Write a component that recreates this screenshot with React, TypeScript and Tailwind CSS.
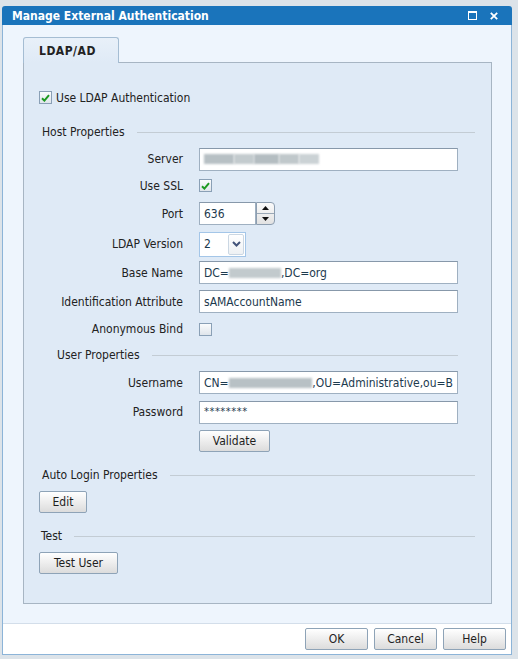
import React from "react";

const FONT = "font-['DejaVu_Sans_Condensed','DejaVu_Sans',sans-serif] font-stretch-condensed";

function CheckBox({ checked }: { checked?: boolean }) {
  return (
    <div className="w-[13px] h-[13px] border border-[#8aa0b6] bg-gradient-to-b from-[#fbfcfd] to-[#dfe5eb] flex items-center justify-center">
      {checked && (
        <svg width="9" height="8" viewBox="0 0 9 8">
          <path d="M1 4.2 L3.4 6.6 L8 1.2" stroke="#1e9a22" strokeWidth="2" fill="none" />
        </svg>
      )}
    </div>
  );
}

function Btn({ w, children }: { w: string; children: React.ReactNode }) {
  return (
    <button
      className={`${w} h-[22px] border border-[#8ea3b7] rounded-[2px] bg-gradient-to-b from-[#ffffff] to-[#dcdcdc] text-[12px] text-[#1e1e1e] leading-none flex items-center justify-center`}
    >
      {children}
    </button>
  );
}

function Blur({ w, shade = "#b9c2c6" }: { w: number; shade?: string }) {
  return <span className="inline-block h-[10px] blur-[1px] align-middle" style={{ width: w, background: shade }} />;
}

function Input({ children, w = "w-[259px]" }: { children?: React.ReactNode; w?: string }) {
  return (
    <div className={`${w} h-[23px] border border-[#9fb0c1] border-t-[#8798aa] bg-white px-[4px] flex items-center text-[12px] text-[#1c3a4e] whitespace-nowrap overflow-hidden`}>
      {children}
    </div>
  );
}

function Row({ h, label, children }: { h: string; label?: string; children?: React.ReactNode }) {
  return (
    <div className={`${h} flex items-center`}>
      <div className="w-[144px] text-right text-[12px] text-[#222]">{label}</div>
      <div className="ml-[16px] flex items-center">{children}</div>
    </div>
  );
}

function Header({ label, pl, lineEnd }: { label: string; pl: string; lineEnd?: string }) {
  return (
    <div className={`h-[14px] flex items-center ${pl} ${lineEnd ?? ""}`}>
      <span className="text-[12px] text-[#222] whitespace-nowrap">{label}</span>
      <div className="flex-1 ml-[12px] h-[1px] bg-[#c3ccd4]" />
    </div>
  );
}

export default function App() {
  return (
    <div className={`w-[518px] h-[659px] bg-[#dce3e9] pt-[6px] pl-[2px] ${FONT}`}>
      <div className="w-[510px] h-[649px] flex flex-col rounded-t-[3px] overflow-hidden">
        {/* Title bar */}
        <div className="h-[19px] bg-[#1a74bb] flex items-center pl-[10px] pr-[14px]">
          <span className="text-white font-bold text-[12px] leading-none">Manage External Authentication</span>
          <div className="flex-1" />
          <div className="w-[9px] h-[9px] border border-white border-t-2 mr-[13px]" />
          <svg width="8" height="8" viewBox="0 0 8 8">
            <path d="M0.8 0.8 L7.2 7.2 M7.2 0.8 L0.8 7.2" stroke="white" strokeWidth="1.8" />
          </svg>
        </div>
        {/* Body */}
        <div className="flex-1 flex flex-col border-x border-b border-[#8cb4d8]">
          <div className="flex-1 bg-[#eef5fd] pl-[20px] pt-[12px]">
            <div className="relative z-10 w-[96px] h-[26px] -mb-[1px] border border-b-0 border-[#a5bdd3] rounded-t-[3px] bg-gradient-to-b from-[#e8f0f9] to-[#dfeaf6] flex items-center pl-[15px]">
              <span className="font-bold text-[12px] text-[#222] tracking-[0.5px]">LDAP/AD</span>
            </div>
            <div className="w-[469px] border border-[#a7b5c3] bg-[#dfeaf6] pt-[28px] pb-[29px] pl-[15px] pr-[16px] flex flex-col">
              <div className="h-[13px] flex items-center">
                <CheckBox checked />
                <span className="ml-[4px] text-[12px] text-[#222]">Use LDAP Authentication</span>
              </div>
              <div className="mt-[21px]">
                <Header label="Host Properties" pl="pl-[3px]" />
              </div>
              <div className="mt-[7px] flex flex-col">
                <Row h="h-[26px]" label="Server">
                  <Input>
                    <span className="flex items-center gap-0">
                      <Blur w={30} shade="#b7c0c4" />
                      <Blur w={20} shade="#c3cbce" />
                      <Blur w={25} shade="#b4bdc1" />
                      <Blur w={20} shade="#c0c8cb" />
                      <Blur w={20} shade="#cbd2d5" />
                    </span>
                  </Input>
                </Row>
                <Row h="h-[27px]" label="Use SSL">
                  <CheckBox checked />
                </Row>
                <Row h="h-[29px]" label="Port">
                  <Input w="w-[57px]">636</Input>
                  <div className="w-[19px] h-[23px] border border-[#8d9eb0] rounded-r-[4px] bg-gradient-to-b from-[#fbfbfb] to-[#e2e2e2] flex flex-col">
                    <div className="flex-1 flex items-center justify-center border-b border-[#9aa8b6]">
                      <svg width="7" height="4" viewBox="0 0 7 4"><path d="M0 4 L3.5 0 L7 4 Z" fill="#111" /></svg>
                    </div>
                    <div className="flex-1 flex items-center justify-center">
                      <svg width="7" height="4" viewBox="0 0 7 4"><path d="M0 0 L3.5 4 L7 0 Z" fill="#111" /></svg>
                    </div>
                  </div>
                </Row>
                <Row h="h-[32px]" label="LDAP Version">
                  <div className="w-[47px] h-[25px] border border-[#a4c6e8] bg-white flex items-center">
                    <span className="flex-1 pl-[4px] text-[12px] text-[#1c3a4e]">2</span>
                    <div className="w-[16px] h-[21px] mr-[1px] border border-[#cbd7e3] rounded-[2px] bg-gradient-to-b from-white to-[#eef1f4] flex items-center justify-center">
                      <svg width="9" height="6" viewBox="0 0 9 6"><path d="M1 1 L4.5 4.5 L8 1" stroke="#44547a" strokeWidth="2" fill="none" /></svg>
                    </div>
                  </div>
                </Row>
                <Row h="h-[25px]" label="Base Name">
                  <Input>
                    DC=<Blur w={52} shade="#c2cacd" />,DC=org
                  </Input>
                </Row>
                <Row h="h-[33px]" label="Identification Attribute">
                  <Input>sAMAccountName</Input>
                </Row>
                <Row h="h-[22px]" label="Anonymous Bind">
                  <CheckBox />
                </Row>
                <div className="h-[30px] flex items-center">
                  <div className="w-[419px] pl-[18px]">
                    <Header label="User Properties" pl="" />
                  </div>
                </div>
                <Row h="h-[25px]" label="Username">
                  <Input>
                    CN=<Blur w={93} shade="#b8c1c5" />,OU=Administrative,ou=B
                  </Input>
                </Row>
                <Row h="h-[34px]" label="Password">
                  <Input>
                    <span className="tracking-[0.5px] text-[11px]">********</span>
                  </Input>
                </Row>
                <Row h="h-[23px]">
                  <Btn w="w-[71px]">Validate</Btn>
                </Row>
              </div>
              <div className="mt-[16px]">
                <Header label="Auto Login Properties" pl="pl-[3px]" />
              </div>
              <div className="mt-[9px]">
                <Btn w="w-[48px]">Edit</Btn>
              </div>
              <div className="mt-[16px]">
                <Header label="Test" pl="pl-[2px]" />
              </div>
              <div className="mt-[9px]">
                <Btn w="w-[79px]">Test User</Btn>
              </div>
            </div>
          </div>
          {/* Footer */}
          <div className="h-[31px] bg-white border-t border-[#d3deea] flex items-center justify-end gap-[6px] pr-[5px]">
            <Btn w="w-[63px]">OK</Btn>
            <Btn w="w-[63px]">Cancel</Btn>
            <Btn w="w-[63px]">Help</Btn>
          </div>
        </div>
      </div>
    </div>
  );
}
